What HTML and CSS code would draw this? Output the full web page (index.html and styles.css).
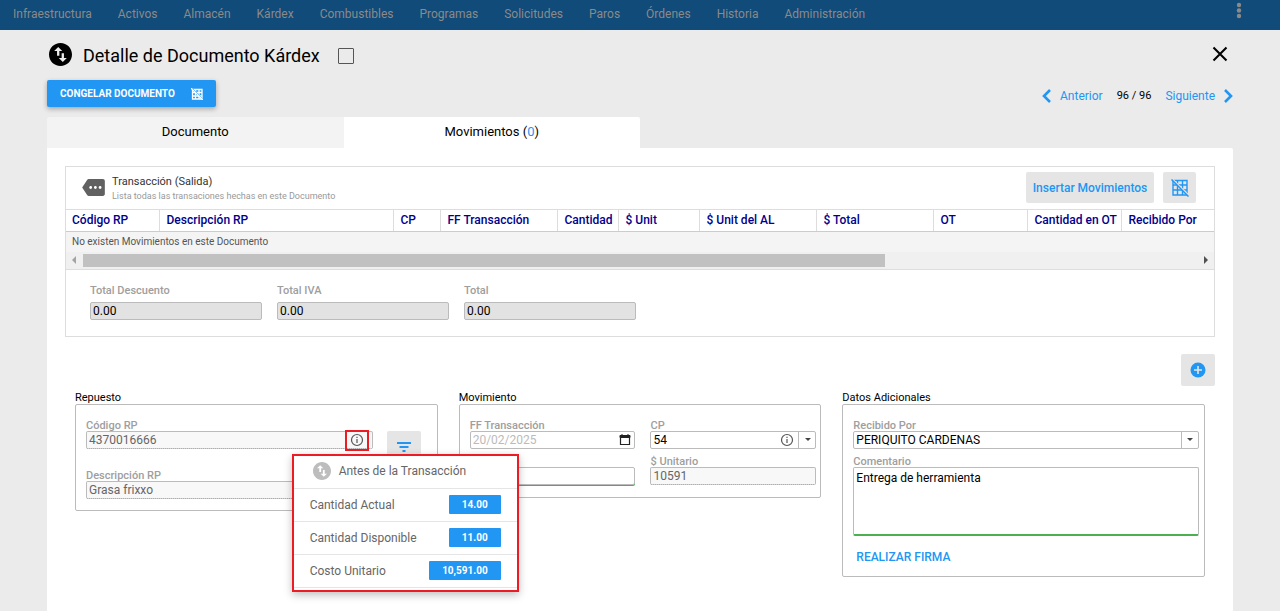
FILE: index.html
```html
<!DOCTYPE html>
<html lang="es">
<head>
<meta charset="utf-8">
<meta name="viewport" content="width=device-width, initial-scale=1">
<title>Detalle de Documento Kárdex</title>
<link rel="stylesheet" href="styles.css">
</head>
<body>
<header class="topbar">
  <nav class="topbar-nav">
    <a href="#">Infraestructura</a>
    <a href="#">Activos</a>
    <a href="#">Almacén</a>
    <a href="#">Kárdex</a>
    <a href="#">Combustibles</a>
    <a href="#">Programas</a>
    <a href="#">Solicitudes</a>
    <a href="#">Paros</a>
    <a href="#">Órdenes</a>
    <a href="#">Historia</a>
    <a href="#">Administración</a>
  </nav>
  <button class="icon-button more" aria-label="Más opciones">
    <svg width="6" height="18" viewBox="0 0 6 18"><circle cx="3" cy="3" r="2.2"/><circle cx="3" cy="8.5" r="2.2"/><circle cx="3" cy="14" r="2.2"/></svg>
  </button>
</header>

<main class="page">
  <div class="title-row">
    <svg class="title-icon" viewBox="2 2 20 20"><path d="M12 2C6.480 2 2 6.480 2 12s4.480 10 10 10 10-4.480 10-10S17.520 2 12 2zM6.500 9L10 5.500 13.500 9H11v4H9V9H6.500zm11 6L14 18.500 10.500 15H13v-4h2v4h2.500z"/></svg>
    <h1>Detalle de Documento Kárdex</h1>
    <input type="checkbox" class="title-check" aria-label="Seleccionar documento">
    <button class="icon-button close" aria-label="Cerrar">
      <svg width="16" height="16" viewBox="0 0 16 16"><path d="M1.500 1.500l13 13M14.500 1.500l-13 13" fill="none" stroke="#000" stroke-width="2.100"/></svg>
    </button>
  </div>

  <div class="action-row">
    <button class="primary">CONGELAR DOCUMENTO
      <svg width="12" height="12" viewBox="0 0 12 12"><path d="M1.500 1.500h9.500v9.500h-9.500zM4.500 1.500V11M8 1.500V11M1.500 4.500H11M1.500 8H11" fill="none" stroke="#fff" stroke-width="1.300"/><path d="M1 0l11 11" stroke="#2196f3" stroke-width="1"/><path d="M0 0l12 12" stroke="#fff" stroke-width="1.300"/></svg>
    </button>
    <nav class="pager" aria-label="Paginación">
      <a href="#"><svg width="10" height="14" viewBox="0 0 10 14"><path d="M8 1L2 7l6 6" fill="none" stroke="currentColor" stroke-width="2.600"/></svg>Anterior</a>
      <span>96 / 96</span>
      <a href="#">Siguiente<svg width="10" height="14" viewBox="0 0 10 14"><path d="M2 1l6 6-6 6" fill="none" stroke="currentColor" stroke-width="2.600"/></svg></a>
    </nav>
  </div>

  <div class="tabs" role="tablist">
    <button role="tab" class="tab" aria-selected="false">Documento</button>
    <button role="tab" class="tab active" aria-selected="true">Movimientos (<b>0</b>)</button>
  </div>

  <section class="panel">
    <section class="transactions">
      <div class="trans-head">
        <svg class="tag-icon" width="24" height="18" viewBox="0 3 24 18"><path fill="#616161" d="M22 3H7c-.69 0-1.230.35-1.590.88L0 12l5.410 8.110c.36.530.97.890 1.660.890H22c1.100 0 2-.9 2-2V5c0-1.100-.9-2-2-2zM9 13.500c-.83 0-1.500-.67-1.500-1.500s.67-1.500 1.500-1.500 1.500.67 1.500 1.500-.67 1.500-1.500 1.500zm5 0c-.83 0-1.500-.67-1.500-1.500s.67-1.500 1.500-1.500 1.500.67 1.500 1.500-.67 1.500-1.500 1.500zm5 0c-.83 0-1.500-.67-1.500-1.500s.67-1.500 1.500-1.500 1.500.67 1.500 1.500-.67 1.500-1.500 1.500z"/></svg>
        <div class="trans-title">
          <h2>Transacción (Salida)</h2>
          <p>Lista todas las transaciones hechas en este Documento</p>
        </div>
        <button class="soft">Insertar Movimientos</button>
        <button class="soft square" aria-label="Ocultar cuadrícula">
          <svg width="18" height="18" viewBox="0 0 18 18"><path d="M2 1.500h14v14.500M2 1.500V16h14M6.500 1.500V16M11.500 1.500V16M2 6h14M2 11h14" fill="none" stroke="#2196f3" stroke-width="1.400"/><path d="M1.500 .5l16 16" stroke="#e5e5e5" stroke-width="2"/><path d="M.5 .5l17 17" stroke="#2196f3" stroke-width="1.500"/></svg>
        </button>
      </div>
      <table class="moves">
        <colgroup><col class="w93"><col class="w234"><col class="w47"><col class="w117"><col class="w61"><col class="w81"><col class="w117"><col class="w117"><col class="w94"><col class="w94"><col></colgroup>
        <thead><tr><th>Código RP</th><th>Descripción RP</th><th>CP</th><th>FF Transacción</th><th>Cantidad</th><th>$ Unit</th><th>$ Unit del AL</th><th>$ Total</th><th>OT</th><th>Cantidad en OT</th><th>Recibido Por</th></tr></thead>
        <tbody><tr><td colspan="11">No existen Movimientos en este Documento</td></tr></tbody>
      </table>
      <div class="scrollbar">
        <svg width="17" height="17" viewBox="0 0 17 17"><path d="M10 4v8L6 8z" fill="#a3a3a3"/></svg>
        <div class="track"><div class="thumb"></div></div>
        <svg width="17" height="17" viewBox="0 0 17 17"><path d="M7 4v8l4-4z" fill="#505050"/></svg>
      </div>
      <div class="totals">
        <div class="field"><label for="desc">Total Descuento</label><input id="desc" value="0.00" readonly></div>
        <div class="field"><label for="iva">Total IVA</label><input id="iva" value="0.00" readonly></div>
        <div class="field"><label for="total">Total</label><input id="total" value="0.00" readonly></div>
      </div>
    </section>

    <div class="add-row">
      <button class="soft add" aria-label="Agregar">
        <svg width="16" height="16" viewBox="0 0 16 16"><circle cx="8" cy="8" r="7.500" fill="#2196f3"/><path d="M8 4v8M4 8h8" stroke="#e5e5e5" stroke-width="1.600"/></svg>
      </button>
    </div>

    <div class="groups">
      <section class="group">
        <h3>Repuesto</h3>
        <div class="card">
          <div class="code-row">
            <div class="field grow">
              <label for="codigo">Código RP</label>
              <div class="stack">
                <input id="codigo" class="locked" value="4370016666" readonly>
                <div class="info-anchor">
                  <button class="info-button" aria-label="Información del repuesto">
                    <svg width="14" height="14" viewBox="0 0 14 14"><circle cx="7" cy="7" r="5.500" fill="none" stroke="#555" stroke-width="1.200"/><path d="M7 6v4M7 3.700v1.300" stroke="#555" stroke-width="1.200"/></svg>
                  </button>
                  <div class="popup">
                    <div class="popup-head">
                      <svg width="18" height="18" viewBox="2 2 20 20"><path fill="#bdbdbd" d="M12 2C6.480 2 2 6.480 2 12s4.480 10 10 10 10-4.480 10-10S17.520 2 12 2zM6.500 9L10 5.500 13.500 9H11v4H9V9H6.500zm11 6L14 18.500 10.500 15H13v-4h2v4h2.500z"/></svg>
                      <span>Antes de la Transacción</span>
                    </div>
                    <div class="popup-row"><span>Cantidad Actual</span><b>14.00</b></div>
                    <div class="popup-row"><span>Cantidad Disponible</span><b>11.00</b></div>
                    <div class="popup-row"><span>Costo Unitario</span><b>10,591.00</b></div>
                  </div>
                </div>
              </div>
            </div>
            <button class="soft filter" aria-label="Filtrar">
              <svg width="14" height="10" viewBox="0 0 14 10"><path d="M0 1h14M2.500 5h9M5.500 9h3" stroke="#2196f3" stroke-width="2"/></svg>
            </button>
          </div>
          <div class="field"><label for="descripcion">Descripción RP</label><input id="descripcion" class="locked" value="Grasa frixxo" readonly></div>
        </div>
      </section>

      <section class="group">
        <h3>Movimiento</h3>
        <div class="card two">
          <div class="field">
            <label for="fecha">FF Transacción</label>
            <div class="stack">
              <input id="fecha" class="date" value="20/02/2025" readonly>
              <svg class="end-icon" width="12" height="12" viewBox="0 0 12 12"><path d="M1.500 2h9v8.500h-9z" fill="none" stroke="#222" stroke-width="1.200"/><path d="M1 1.500h10V3.500H1zM3 0v2M9 0v2" fill="#222" stroke="#222"/></svg>
            </div>
          </div>
          <div class="field">
            <label for="cp">CP</label>
            <div class="stack">
              <select id="cp"><option>54</option></select>
              <span class="select-end">
                <svg width="14" height="14" viewBox="0 0 14 14"><circle cx="7" cy="7" r="5.500" fill="none" stroke="#555" stroke-width="1.200"/><path d="M7 6v4M7 3.700v1.300" stroke="#555" stroke-width="1.200"/></svg>
                <span class="arrow"><svg width="6" height="3" viewBox="0 0 6 3"><path d="M0 0h6L3 3z" fill="#444"/></svg></span>
              </span>
            </div>
          </div>
          <div class="field"><label for="cantidad">Cantidad</label><input id="cantidad" class="changed"></div>
          <div class="field"><label for="unitario">$ Unitario</label><input id="unitario" class="locked" value="10591" readonly></div>
        </div>
      </section>

      <section class="group">
        <h3>Datos Adicionales</h3>
        <div class="card extra">
          <div class="field">
            <label for="recibido">Recibido Por</label>
            <div class="stack">
              <select id="recibido"><option>PERIQUITO CARDENAS</option></select>
              <span class="select-end"><span class="arrow"><svg width="6" height="3" viewBox="0 0 6 3"><path d="M0 0h6L3 3z" fill="#444"/></svg></span></span>
            </div>
          </div>
          <div class="field"><label for="comentario">Comentario</label><textarea id="comentario" class="valid">Entrega de herramienta</textarea></div>
          <button class="text-button">REALIZAR FIRMA</button>
        </div>
      </section>
    </div>
  </section>
</main>
</body>
</html>
```
FILE: styles.css
```css
* { box-sizing: border-box; }
body {
  margin: 0;
  min-height: 100vh;
  display: flex;
  flex-direction: column;
  background: #ebebeb;
  color: #000;
  font: 12px/16px Roboto, "Liberation Sans", sans-serif;
}
h1, h2, h3, p { margin: 0; font-weight: 400; }
a { text-decoration: none; color: inherit; }
button, input, select, textarea { font: inherit; color: inherit; margin: 0; }
button { border: 0; padding: 0; background: none; cursor: pointer; }
svg { display: block; flex: none; }

.topbar {
  display: flex;
  align-items: flex-start;
  justify-content: space-between;
  height: 30px;
  padding: 0 38px 0 13px;
  background: #114b79;
  color: #8a8a8a;
}
.topbar-nav { display: flex; gap: 26px; padding-top: 6px; }
.more { padding-top: 2px; }
.more svg { fill: #8a8a8a; }

.page { flex: 1; display: flex; flex-direction: column; padding: 0 47px; }
.title-row { display: flex; align-items: center; height: 50px; padding: 0 5px 2px 2px; }
.title-icon { width: 23px; height: 23px; }
h1 { margin: 4px 18px 0 11px; font-size: 18px; line-height: 24px; }
.title-check {
  appearance: none;
  width: 16px;
  height: 16px;
  margin-top: 4px;
  border: 1px solid #555;
  border-radius: 1px;
}
.close { margin-left: auto; }

.action-row { display: flex; justify-content: space-between; }
.primary {
  display: flex;
  align-items: center;
  justify-content: space-between;
  width: 169px;
  height: 27px;
  padding: 0 13px;
  border-radius: 2px;
  background: #2196f3;
  box-shadow: 0 2px 5px rgba(0, 0, 0, .3);
  color: #fff;
  font-size: 10px;
  font-weight: 700;
}
.pager { display: flex; align-items: center; gap: 14px; padding-top: 4px; }
.pager a { display: flex; align-items: center; gap: 8px; color: #2196f3; }
.pager span { font-size: 11px; }

.tabs { display: flex; margin-top: 10px; }
.tab { width: 25%; height: 31px; padding-bottom: 2px; background: #f3f3f3; font-size: 13px; border-radius: 2px 0 0 0; }
.tab.active { background: #fff; border-radius: 0 2px 0 0; }
.tab b { font-weight: 400; color: #2196f3; }

.panel { flex: 1; padding: 18px; background: #fff; border-radius: 0 2px 0 0; }
.transactions { border: 1px solid #ddd; }
.trans-head { display: flex; height: 42px; padding: 0 18px 0 16px; }
.tag-icon { width: 23px; height: 17px; margin-top: 12px; }
.trans-title { flex: 1; padding: 7px 0 0 7px; }
.trans-title h2 { font-size: 11px; line-height: 15px; color: #333; }
.trans-title p { font-size: 9px; line-height: 14px; color: #999; }
.soft { background: #e5e5e5; border-radius: 2px; color: #2196f3; font-weight: 500; }
.trans-head .soft { width: 128px; height: 31px; margin-top: 5px; }
.trans-head .square { width: 33px; margin-left: 9px; padding-left: 8px; }

.moves { width: 100%; table-layout: fixed; border-collapse: collapse; }
.moves th, .moves td { text-align: left; padding: 0 0 0 6px; white-space: nowrap; }
.moves th {
  height: 22px;
  padding-bottom: 2px;
  border: 1px solid #ddd;
  border-bottom-color: #ccc;
  color: #00008b;
  font-weight: 500;
}
.moves th:first-child { border-left: 0; }
.moves th:last-child { border-right: 0; }
.moves th + th { padding-left: 7px; }
.moves td { height: 20px; background: #f4f4f4; color: #555; font-size: 10px; }
.w93 { width: 93px; }
.w94 { width: 94px; }
.w234 { width: 234px; }
.w47 { width: 47px; }
.w117 { width: 117px; }
.w61 { width: 61px; }
.w81 { width: 81px; }
.scrollbar { display: flex; height: 18px; background: #f0f0f0; border-bottom: 1px solid #ddd; }
.track { flex: 1; padding-top: 2px; }
.thumb { width: 72%; height: 13px; background: #c1c1c1; }

.totals { display: grid; grid-template-columns: repeat(3, 172px); gap: 15px; padding: 14px 24px 16px; }
.field { display: flex; flex-direction: column; min-width: 0; }
.field label { font-size: 11px; font-weight: 500; line-height: 10px; color: #9e9e9e; }
.totals label { line-height: 14px; margin-bottom: 4px; }
.field input, .field select, .field textarea {
  width: 100%;
  height: 18px;
  padding: 0 2px;
  border: 1px solid #bbb;
  border-radius: 2px;
  background: #fff;
}
.totals input { background: #e2e2e2; }
.field .locked { background: #f8f8f8; border-bottom-style: dotted; border-bottom-color: #888; color: #666; }
.field .valid { border-bottom-color: #4caf50; }
.field .changed { box-shadow: 0 1px 0 #4caf50; }
.field .date { color: #bbb; }

.add-row { display: flex; justify-content: flex-end; padding-top: 17px; }
.add { width: 34px; height: 32px; padding-left: 9px; }

.groups { display: grid; grid-template-columns: repeat(3, 1fr); gap: 21px; align-items: start; padding: 5px 10px 0; }
.group h3 { font-size: 11px; line-height: 13px; }
.card { border: 1px solid #bbb; border-radius: 2px; padding: 16px 10px 11px; }
.code-row { display: flex; align-items: flex-start; gap: 14px; height: 50px; }
.grow { flex: 1; }
.stack { display: grid; }
.stack > * { grid-area: 1 / 1; }
.filter { width: 34px; height: 32px; margin: 10px 6px 0 0; padding-left: 10px; }
.info-anchor { position: relative; justify-self: end; margin: -1px 4px -2px 0; z-index: 2; }
.info-button {
  display: grid;
  place-items: center;
  width: 24px;
  height: 21px;
  border: 2px solid #ed1c24;
}
.popup {
  position: absolute;
  top: 24px;
  left: -53px;
  width: 227px;
  border: 2px solid #ed1c24;
  background: #fff;
  box-shadow: 0 3px 8px rgba(0, 0, 0, .25);
  color: #666;
  padding-bottom: 2px;
}
.popup-head { display: flex; align-items: center; gap: 8px; height: 33px; padding: 0 19px 2px; border-bottom: 1px solid #e5e5e5; }
.popup-row { display: flex; align-items: center; justify-content: space-between; height: 33px; padding: 0 16px; border-bottom: 1px solid #e5e5e5; }
.popup-row b { padding: 0 13px; background: #2196f3; border-radius: 1px; color: #fff; font-size: 10px; line-height: 19px; }

.two { display: grid; grid-template-columns: 1fr 1fr; gap: 8px 15px; padding-right: 4px; padding-bottom: 12px; }
.end-icon { justify-self: end; align-self: center; margin-right: 4px; }
.field select { appearance: none; }
.select-end { display: flex; align-items: center; justify-self: end; gap: 4px; pointer-events: none; }
.arrow { display: grid; place-items: center; width: 18px; height: 18px; border-left: 1px solid #bbb; }
.extra { display: flex; flex-direction: column; gap: 8px; padding-right: 5px; padding-bottom: 9px; }
.field textarea { display: block; height: 69px; padding: 2px; resize: none; border-bottom-width: 2px; }
.text-button { align-self: flex-start; margin-top: 3px; padding: 2px 3px; color: #2196f3; font-weight: 500; }
```
